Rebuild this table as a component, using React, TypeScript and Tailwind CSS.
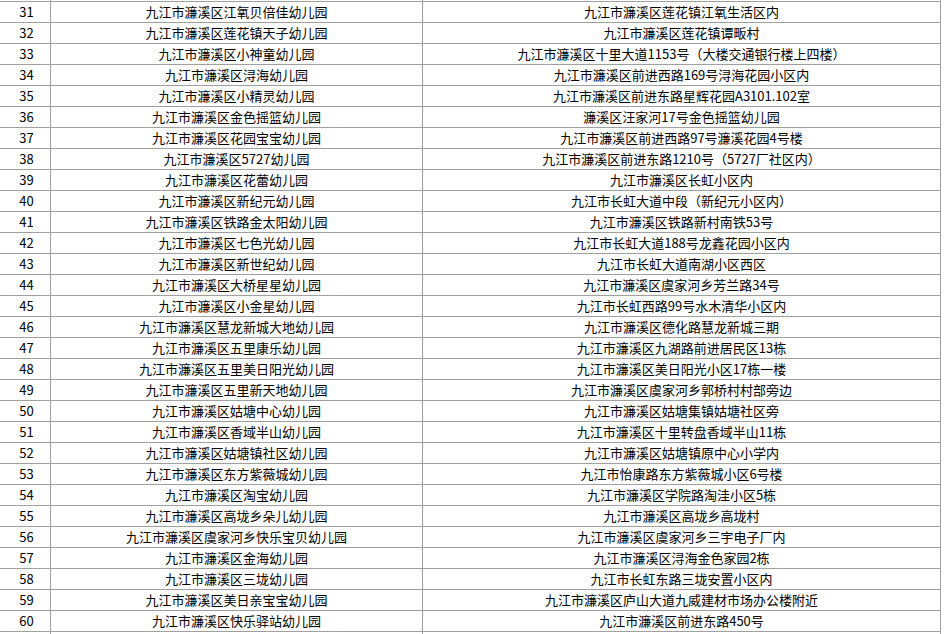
import React from 'react';

type Row = { no: number; name: string; addr: string };

const rows: Row[] = [
  { no: 31, name: '九江市濂溪区江氧贝倍佳幼儿园', addr: '九江市濂溪区莲花镇江氧生活区内' },
  { no: 32, name: '九江市濂溪区莲花镇天子幼儿园', addr: '九江市濂溪区莲花镇谭畈村' },
  { no: 33, name: '九江市濂溪区小神童幼儿园', addr: '九江市濂溪区十里大道1153号（大楼交通银行楼上四楼）' },
  { no: 34, name: '九江市濂溪区浔海幼儿园', addr: '九江市濂溪区前进西路169号浔海花园小区内' },
  { no: 35, name: '九江市濂溪区小精灵幼儿园', addr: '九江市濂溪区前进东路星辉花园A3101.102室' },
  { no: 36, name: '九江市濂溪区金色摇篮幼儿园', addr: '濂溪区汪家河17号金色摇篮幼儿园' },
  { no: 37, name: '九江市濂溪区花园宝宝幼儿园', addr: '九江市濂溪区前进西路97号濂溪花园4号楼' },
  { no: 38, name: '九江市濂溪区5727幼儿园', addr: '九江市濂溪区前进东路1210号（5727厂社区内）' },
  { no: 39, name: '九江市濂溪区花蕾幼儿园', addr: '九江市濂溪区长虹小区内' },
  { no: 40, name: '九江市濂溪区新纪元幼儿园', addr: '九江市长虹大道中段（新纪元小区内）' },
  { no: 41, name: '九江市濂溪区铁路金太阳幼儿园', addr: '九江市濂溪区铁路新村南铁53号' },
  { no: 42, name: '九江市濂溪区七色光幼儿园', addr: '九江市长虹大道188号龙鑫花园小区内' },
  { no: 43, name: '九江市濂溪区新世纪幼儿园', addr: '九江市长虹大道南湖小区西区' },
  { no: 44, name: '九江市濂溪区大桥星星幼儿园', addr: '九江市濂溪区虞家河乡芳兰路34号' },
  { no: 45, name: '九江市濂溪区小金星幼儿园', addr: '九江市长虹西路99号水木清华小区内' },
  { no: 46, name: '九江市濂溪区慧龙新城大地幼儿园', addr: '九江市濂溪区德化路慧龙新城三期' },
  { no: 47, name: '九江市濂溪区五里康乐幼儿园', addr: '九江市濂溪区九湖路前进居民区13栋' },
  { no: 48, name: '九江市濂溪区五里美日阳光幼儿园', addr: '九江市濂溪区美日阳光小区17栋一楼' },
  { no: 49, name: '九江市濂溪区五里新天地幼儿园', addr: '九江市濂溪区虞家河乡郭桥村村部旁边' },
  { no: 50, name: '九江市濂溪区姑塘中心幼儿园', addr: '九江市濂溪区姑塘集镇姑塘社区旁' },
  { no: 51, name: '九江市濂溪区香域半山幼儿园', addr: '九江市濂溪区十里转盘香域半山11栋' },
  { no: 52, name: '九江市濂溪区姑塘镇社区幼儿园', addr: '九江市濂溪区姑塘镇原中心小学内' },
  { no: 53, name: '九江市濂溪区东方紫薇城幼儿园', addr: '九江市怡康路东方紫薇城小区6号楼' },
  { no: 54, name: '九江市濂溪区淘宝幼儿园', addr: '九江市濂溪区学院路淘洼小区5栋' },
  { no: 55, name: '九江市濂溪区高垅乡朵儿幼儿园', addr: '九江市濂溪区高垅乡高垅村' },
  { no: 56, name: '九江市濂溪区虞家河乡快乐宝贝幼儿园', addr: '九江市濂溪区虞家河乡三宇电子厂内' },
  { no: 57, name: '九江市濂溪区金海幼儿园', addr: '九江市濂溪区浔海金色家园2栋' },
  { no: 58, name: '九江市濂溪区三垅幼儿园', addr: '九江市长虹东路三垅安置小区内' },
  { no: 59, name: '九江市濂溪区美日亲宝宝幼儿园', addr: '九江市濂溪区庐山大道九威建材市场办公楼附近' },
  { no: 60, name: '九江市濂溪区快乐驿站幼儿园', addr: '九江市濂溪区前进东路450号' },
];

const cell = 'border border-[#a0a0a0] p-0 h-[21px] text-center align-middle whitespace-nowrap';

export default function App() {
  return (
    <div className="h-[634px] w-[944px] overflow-hidden bg-white">
      <table
        className="table-fixed border-collapse ml-[-1px] mt-[-20px] text-[13px] leading-[20px] text-black"
        style={{ fontFamily: '"Noto Sans CJK SC", "Liberation Sans", sans-serif' }}
      >
        <colgroup>
          <col className="w-[51px]" />
          <col className="w-[372px]" />
          <col className="w-[518px]" />
        </colgroup>
        <tbody>
          {/* row 30 is scrolled off above, only its bottom edge shows */}
          <tr>
            <td className={cell} />
            <td className={cell} />
            <td className={cell} />
          </tr>
          {rows.map((r) => (
            <tr key={r.no}>
              <td className={cell + ' pl-[3px]'}>{r.no}</td>
              <td className={cell}>{r.name}</td>
              <td className={cell}>{r.addr}</td>
            </tr>
          ))}
          <tr>
            <td className={cell} />
            <td className={cell} />
            <td className={cell} />
          </tr>
        </tbody>
      </table>
    </div>
  );
}
